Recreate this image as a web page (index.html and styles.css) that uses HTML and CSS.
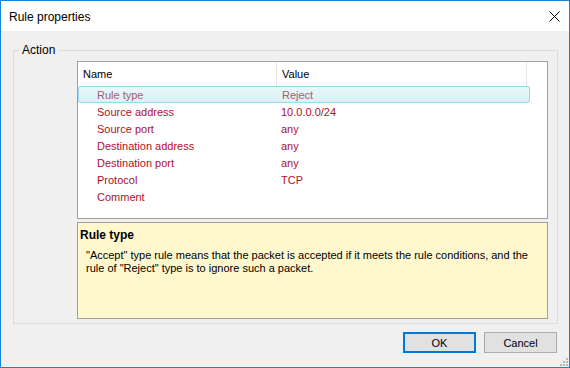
FILE: index.html
```html
<!DOCTYPE html>
<html>
<head>
<meta charset="utf-8">
<link rel="stylesheet" href="styles.css">
</head>
<body>
<div class="window">
  <div class="titlebar">
    <span class="title">Rule properties</span>
    <svg class="close" width="11" height="11" viewBox="0 0 11 11"><path d="M0.5 0.5 L10.5 10.5 M10.5 0.5 L0.5 10.5" stroke="#000" stroke-width="1" fill="none"/></svg>
  </div>
  <div class="content">
    <fieldset class="group">
      <legend class="legend">Action</legend>
      <div class="group-body">
        <div class="list">
          <div class="header">
            <div class="hcell name">Name</div>
            <div class="hcell value">Value</div>
            <div class="hcell rest"></div>
          </div>
          <div class="rows">
            <div class="row selected"><span class="c1">Rule type</span><span class="c2">Reject</span></div>
            <div class="row"><span class="c1">Source address</span><span class="c2">10.0.0.0/24</span></div>
            <div class="row"><span class="c1">Source port</span><span class="c2">any</span></div>
            <div class="row"><span class="c1">Destination address</span><span class="c2">any</span></div>
            <div class="row"><span class="c1">Destination port</span><span class="c2">any</span></div>
            <div class="row"><span class="c1">Protocol</span><span class="c2">TCP</span></div>
            <div class="row"><span class="c1">Comment</span><span class="c2"></span></div>
          </div>
        </div>
        <div class="info">
          <div class="info-title">Rule type</div>
          <div class="info-text">"Accept" type rule means that the packet is accepted if it meets the rule conditions, and the rule of "Reject" type is to ignore such a packet.</div>
        </div>
      </div>
    </fieldset>
    <div class="buttons">
      <button class="btn default">OK</button>
      <button class="btn">Cancel</button>
    </div>
    <svg class="grip" width="8" height="8" viewBox="0 0 8 8">
      <rect x="6" y="0" width="2" height="2" fill="#b8b8b8"/>
      <rect x="3" y="3" width="2" height="2" fill="#b8b8b8"/>
      <rect x="6" y="3" width="2" height="2" fill="#b8b8b8"/>
      <rect x="0" y="6" width="2" height="2" fill="#b8b8b8"/>
      <rect x="3" y="6" width="2" height="2" fill="#b8b8b8"/>
      <rect x="6" y="6" width="2" height="2" fill="#b8b8b8"/>
    </svg>
  </div>
</div>
</body>
</html>
```
FILE: styles.css
```css
* { box-sizing: border-box; }
html, body { margin: 0; padding: 0; }
body {
  font-family: "Liberation Sans", Arial, sans-serif;
  font-size: 11px;
  color: #000;
  background: #f0f0f0;
}
.window {
  width: 570px;
  height: 368px;
  border: 1px solid #1883d7;
  display: flex;
  flex-direction: column;
  background: #f0f0f0;
}
.titlebar {
  height: 30px;
  background: #fff;
  display: flex;
  align-items: center;
  justify-content: space-between;
  padding: 0 9px 0 8px;
}
.title {
  font-size: 12px;
  color: #000;
  margin-top: 2px;
}
.close { display: block; margin-top: 1px; }
.content {
  flex: 1;
  position: relative;
  display: flex;
  flex-direction: column;
}
.group {
  margin: 12px 11px 0 12px;
  padding: 5px 9px 4px 0;
  border: 1px solid #dcdcdc;
  min-width: 0;
}
.legend {
  padding: 0 3px;
  margin-left: 5px;
  font-size: 12px;
  line-height: 14px;
  color: #000;
}
.group-body { padding-left: 63px; }
.list {
  height: 158px;
  background: #fff;
  border: 1px solid #a0a0a0;
  margin-top: -1px;
}
.header {
  display: flex;
  height: 24px;
}
.hcell {
  font-size: 11px;
  line-height: 23px;
  color: #000;
  border-right: 1px solid #e5e5e5;
  padding-top: 1px;
}
.hcell.name { width: 199px; padding-left: 5px; }
.hcell.value { width: 250px; padding-left: 5px; }
.hcell.rest { flex: 1; border-right: none; }
.rows { display: flex; flex-direction: column; }
.row {
  display: flex;
  height: 17px;
  line-height: 18px;
  color: #b0102a;
  margin-right: 17px;
}
.row .c1 { width: 200px; padding-left: 19px; }
.row .c2 { padding-left: 3px; }
.row.selected {
  color: #a0606e;
  border: 1px solid #99d8f3;
  border-radius: 2px;
  background: linear-gradient(#eaf7f9, #daf1f6);
  line-height: 16px;
}
.row.selected .c1 { padding-left: 18px; }
.info {
  margin-top: 3px;
  height: 97px;
  background: #fff8cf;
  border: 1px solid #a0a0a0;
  padding: 5px 8px 0 2px;
}
.info-title {
  font-weight: bold;
  font-size: 12px;
  line-height: 14px;
}
.info-text {
  margin-top: 7px;
  padding-left: 6px;
  line-height: 13px;
  font-size: 11px;
}
.buttons {
  display: flex;
  justify-content: flex-end;
  gap: 8px;
  margin: 8px 12px 0 0;
}
.btn {
  width: 73px;
  height: 21px;
  font-family: "Liberation Sans", Arial, sans-serif;
  font-size: 11px;
  color: #000;
  background: #e1e1e1;
  border: 1px solid #adadad;
  padding: 0;
}
.btn.default { border: 2px solid #0078d7; }
.grip { position: absolute; right: 1px; bottom: 1px; }
```
